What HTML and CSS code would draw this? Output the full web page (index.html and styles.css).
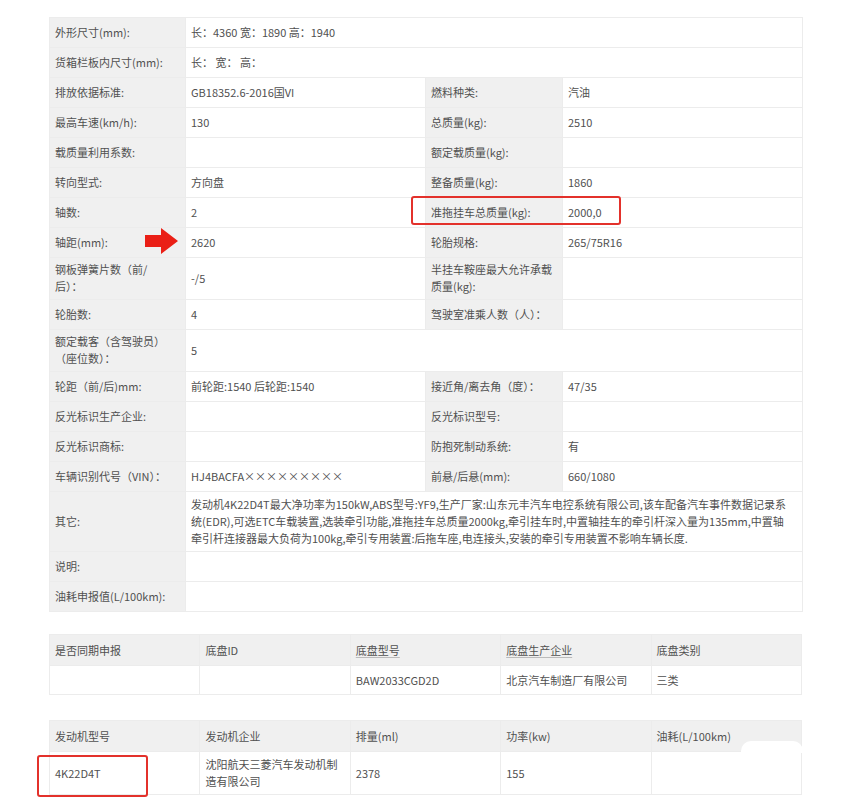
FILE: index.html
```html
<!DOCTYPE html>
<html lang="zh-CN">
<head>
    <meta charset="UTF-8">
    <title>车辆参数</title>
    <link rel="stylesheet" href="styles.css">
</head>
<body>
    <div class="page">
        <table class="spec">
            <colgroup>
                <col class="c-label">
                <col class="c-value">
                <col class="c-label2">
                <col class="c-value">
            </colgroup>
            <tr><th>外形尺寸(mm):</th><td colspan="3">长：4360 宽：1890 高：1940</td></tr>
            <tr><th>货箱栏板内尺寸(mm):</th><td colspan="3">长：&nbsp;宽：&nbsp;高：</td></tr>
            <tr><th>排放依据标准:</th><td>GB18352.6-2016国VI</td><th>燃料种类:</th><td>汽油</td></tr>
            <tr><th>最高车速(km/h):</th><td>130</td><th>总质量(kg):</th><td>2510</td></tr>
            <tr><th>载质量利用系数:</th><td></td><th>额定载质量(kg):</th><td></td></tr>
            <tr><th>转向型式:</th><td>方向盘</td><th>整备质量(kg):</th><td>1860</td></tr>
            <tr><th>轴数:</th><td>2</td><th>准拖挂车总质量(kg):</th><td>2000,0</td></tr>
            <tr><th>轴距(mm):</th><td>2620</td><th>轮胎规格:</th><td>265/75R16</td></tr>
            <tr><th>钢板弹簧片数（前/<br>后）：</th><td>-/5</td><th>半挂车鞍座最大允许承载质量(kg):</th><td></td></tr>
            <tr><th>轮胎数:</th><td>4</td><th>驾驶室准乘人数（人）：</th><td></td></tr>
            <tr><th>额定载客（含驾驶员）<br>（座位数）：</th><td colspan="3">5</td></tr>
            <tr><th>轮距（前/后)mm:</th><td>前轮距:1540 后轮距:1540</td><th>接近角/离去角（度）：</th><td>47/35</td></tr>
            <tr><th>反光标识生产企业:</th><td></td><th>反光标识型号:</th><td></td></tr>
            <tr><th>反光标识商标:</th><td></td><th>防抱死制动系统:</th><td>有</td></tr>
            <tr><th>车辆识别代号（VIN）：</th><td>HJ4BACFA×××××××××</td><th>前悬/后悬(mm):</th><td>660/1080</td></tr>
            <tr class="tall"><th>其它:</th><td colspan="3">发动机4K22D4T最大净功率为150kW,ABS型号:YF9,生产厂家:山东元丰汽车电控系统有限公司,该车配备汽车事件数据记录系<br>统(EDR),可选ETC车载装置,选装牵引功能,准拖挂车总质量2000kg,牵引挂车时,中置轴挂车的牵引杆深入量为135mm,中置轴<br>牵引杆连接器最大负荷为100kg,牵引专用装置:后拖车座,电连接头,安装的牵引专用装置不影响车辆长度.</td></tr>
            <tr><th>说明:</th><td colspan="3"></td></tr>
            <tr><th>油耗申报值(L/100km):</th><td colspan="3"></td></tr>
        </table>

        <table class="grid chassis">
            <tr class="head"><td>是否同期申报</td><td>底盘ID</td><td><u>底盘型号</u></td><td><u>底盘生产企业</u></td><td>底盘类别</td></tr>
            <tr><td></td><td></td><td>BAW2033CGD2D</td><td>北京汽车制造厂有限公司</td><td>三类</td></tr>
        </table>

        <table class="grid engine">
            <tr class="head"><td>发动机型号</td><td>发动机企业</td><td>排量(ml)</td><td>功率(kw)</td><td>油耗(L/100km)</td></tr>
            <tr><td>4K22D4T</td><td>沈阳航天三菱汽车发动机制造有限公司</td><td>2378</td><td>155</td><td></td></tr>
        </table>

        <div class="mark box-tow"></div>
        <div class="mark box-engine"></div>
        <svg class="arrow" width="33" height="26" viewBox="0 0 33 26">
            <polygon points="0,7 16,7 16,0 33,13 16,26 16,19 0,19" fill="#ea1f16"/>
        </svg>
        <div class="blot"></div>
    </div>
</body>
</html>
```

FILE: styles.css
```css
body {
    margin: 0;
    background: #fff;
    font-family: "Noto Sans CJK SC", "Noto Sans", sans-serif;
    font-size: 11px;
    color: #505050;
}
.page {
    position: relative;
    width: 753px;
    padding: 17px 0 20px 49px;
}
table {
    border-collapse: collapse;
    width: 753px;
    table-layout: fixed;
}
.spec th,
.spec td {
    border: 1px solid #ececec;
    padding: 3px 5px 4px 5px;
    line-height: 17px;
    height: 22px;
    text-align: left;
    font-weight: normal;
    vertical-align: middle;
    word-break: break-all;
}
.spec th {
    background: #f0f0f0;
    padding-right: 3px;
}
.spec .tall td {
    padding-top: 4px;
    padding-bottom: 4px;
    white-space: nowrap;
}
.c-label {
    width: 136px;
}
.c-label2 {
    width: 137px;
}
.c-value {
    width: 240px;
}
.grid {
    margin-top: 22px;
}
.grid td {
    border: 1px solid #ececec;
    padding: 4px 5px;
    line-height: 17px;
    height: 20px;
    vertical-align: middle;
}
.grid .head td {
    background: #f0f0f0;
    height: 22px;
}
.grid u {
    text-decoration-color: #bbb;
    text-underline-offset: 2px;
}
.engine {
    margin-top: 25px;
}
.engine tr:last-child td {
    height: 32px;
}
.mark {
    position: absolute;
    border: 2px solid #e3312b;
    border-radius: 3px;
}
.box-tow {
    left: 411px;
    top: 196px;
    width: 206px;
    height: 25px;
}
.box-engine {
    left: 37px;
    top: 755px;
    width: 107px;
    height: 38px;
}
.arrow {
    position: absolute;
    left: 145px;
    top: 228px;
}
.blot {
    position: absolute;
    left: 741px;
    top: 741px;
    width: 62px;
    height: 12px;
    background: #fff;
    border-radius: 10px 10px 0 0;
}
```
